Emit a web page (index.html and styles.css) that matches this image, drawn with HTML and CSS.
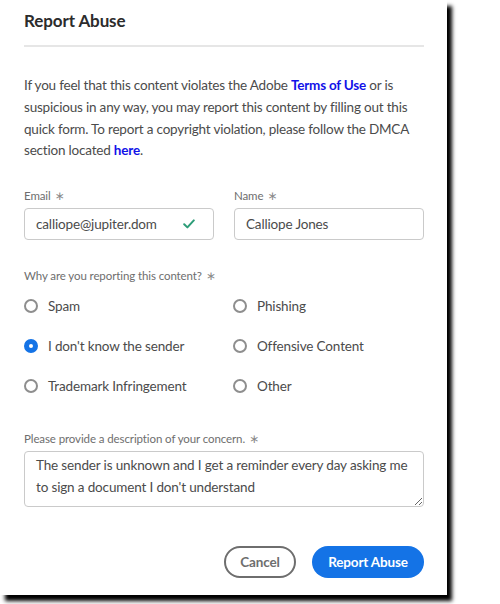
FILE: index.html
```html
<!DOCTYPE html>
<html>
<head>
<meta charset="utf-8">
<link rel="stylesheet" href="styles.css">
</head>
<body>
<div class="dialog">
  <h1 class="title">Report Abuse</h1>
  <div class="divider"></div>
  <p class="intro">If you feel that this content violates the Adobe <a class="link">Terms of Use</a> or is suspicious in any way, you may report this content by filling out this quick form. To report a copyright violation, please follow the DMCA section located <a class="link">here</a>.</p>

  <div class="fields">
    <div class="field">
      <div class="label">Email <span class="req">∗</span></div>
      <div class="input">
        <span>calliope@jupiter.dom</span>
        <svg class="check" width="12" height="10" viewBox="0 0 12 10"><path d="M1.2 5.2 L4.4 8.4 L10.8 1.4" fill="none" stroke="#2d9d78" stroke-width="2" stroke-linecap="round" stroke-linejoin="round"/></svg>
      </div>
    </div>
    <div class="field">
      <div class="label">Name <span class="req">∗</span></div>
      <div class="input"><span>Calliope Jones</span></div>
    </div>
  </div>

  <div class="label group-label">Why are you reporting this content? <span class="req">∗</span></div>
  <div class="radios">
    <div class="radio"><span class="dot"></span>Spam</div>
    <div class="radio"><span class="dot"></span>Phishing</div>
    <div class="radio"><span class="dot on"></span>I don't know the sender</div>
    <div class="radio"><span class="dot"></span>Offensive Content</div>
    <div class="radio"><span class="dot"></span>Trademark Infringement</div>
    <div class="radio"><span class="dot"></span>Other</div>
  </div>

  <div class="label desc-label">Please provide a description of your concern. <span class="req">∗</span></div>
  <textarea class="textarea">The sender is unknown and I get a reminder every day asking me to sign a document I don't understand</textarea>

  <div class="actions">
    <button class="btn cancel">Cancel</button>
    <button class="btn primary">Report Abuse</button>
  </div>
</div>
</body>
</html>
```

FILE: styles.css
```css
html, body {
  margin: 0;
  padding: 0;
  background: #fff;
}
html {
  height: 604px;
}
body {
  font-family: Lato, "Open Sans", sans-serif;
  color: #4b4b4b;
  height: 604px;
}
.dialog {
  box-sizing: border-box;
  width: 447px;
  height: 595px;
  padding: 0 23px 0 24px;
  background: #fff;
  box-shadow: 5px 6px 4px #000;
  display: flex;
  flex-direction: column;
}
.title {
  margin: 0;
  padding-top: 9px;
  font-size: 17px;
  line-height: 24px;
  font-weight: 700;
  color: #2c2c2c;
  letter-spacing: -0.1px;
}
.divider {
  height: 2px;
  background: #e6e6e6;
  margin-top: 12px;
}
.intro {
  margin: 28px 0 0;
  font-size: 13.5px;
  letter-spacing: -0.2px;
  line-height: 21.8px;
}
.link {
  color: #1212e8;
  font-weight: 700;
}
.fields {
  display: grid;
  grid-template-columns: 190px 190px;
  column-gap: 20px;
  margin-top: 26px;
}
.label {
  font-size: 11.5px;
  letter-spacing: -0.1px;
  line-height: 16px;
  color: #6e6e6e;
}
.req {
  font-family: "DejaVu Sans", sans-serif;
  font-size: 12px;
  color: #8a8a8a;
  margin-left: 1px;
}
.field .label {
  margin-bottom: 4px;
}
.input {
  box-sizing: border-box;
  height: 32px;
  border: 1px solid #cacaca;
  border-radius: 4px;
  padding: 0 18px 0 11px;
  display: flex;
  align-items: center;
  justify-content: space-between;
  font-size: 13.5px;
  letter-spacing: -0.15px;
  color: #4b4b4b;
}
.check {
  display: block;
}
.group-label {
  margin-top: 28px;
}
.radios {
  display: grid;
  grid-template-columns: 209px 1fr;
  grid-auto-rows: 40px;
  margin-top: 2px;
}
.radio {
  display: flex;
  align-items: center;
  font-size: 13.5px;
  letter-spacing: -0.15px;
  color: #4b4b4b;
}
.dot {
  box-sizing: border-box;
  width: 14px;
  height: 14px;
  border-radius: 50%;
  border: 2px solid #8e8e8e;
  margin-right: 10px;
  flex: none;
}
.dot.on {
  border: 5px solid #1473e6;
  background: #fff;
}
.desc-label {
  margin-top: 25px;
}
.textarea {
  box-sizing: border-box;
  display: block;
  width: 400px;
  height: 56px;
  margin-top: 4px;
  padding: 2px 11px;
  border: 1px solid #cacaca;
  border-radius: 4px;
  font-family: inherit;
  font-size: 13.5px;
  letter-spacing: -0.15px;
  line-height: 22px;
  color: #4b4b4b;
  resize: both;
  overflow: hidden;
}
.actions {
  display: flex;
  justify-content: flex-end;
  gap: 16px;
  margin-top: 39px;
}
.btn {
  box-sizing: border-box;
  height: 32px;
  border-radius: 16px;
  font-family: inherit;
  font-size: 13.5px;
  letter-spacing: -0.15px;
  font-weight: 700;
  padding: 0;
  white-space: nowrap;
}
.cancel {
  width: 72px;
  border: 2px solid #6e6e6e;
  background: #fff;
  color: #6e6e6e;
}
.primary {
  width: 112px;
  border: none;
  background: #1473e6;
  color: #fff;
}
```
